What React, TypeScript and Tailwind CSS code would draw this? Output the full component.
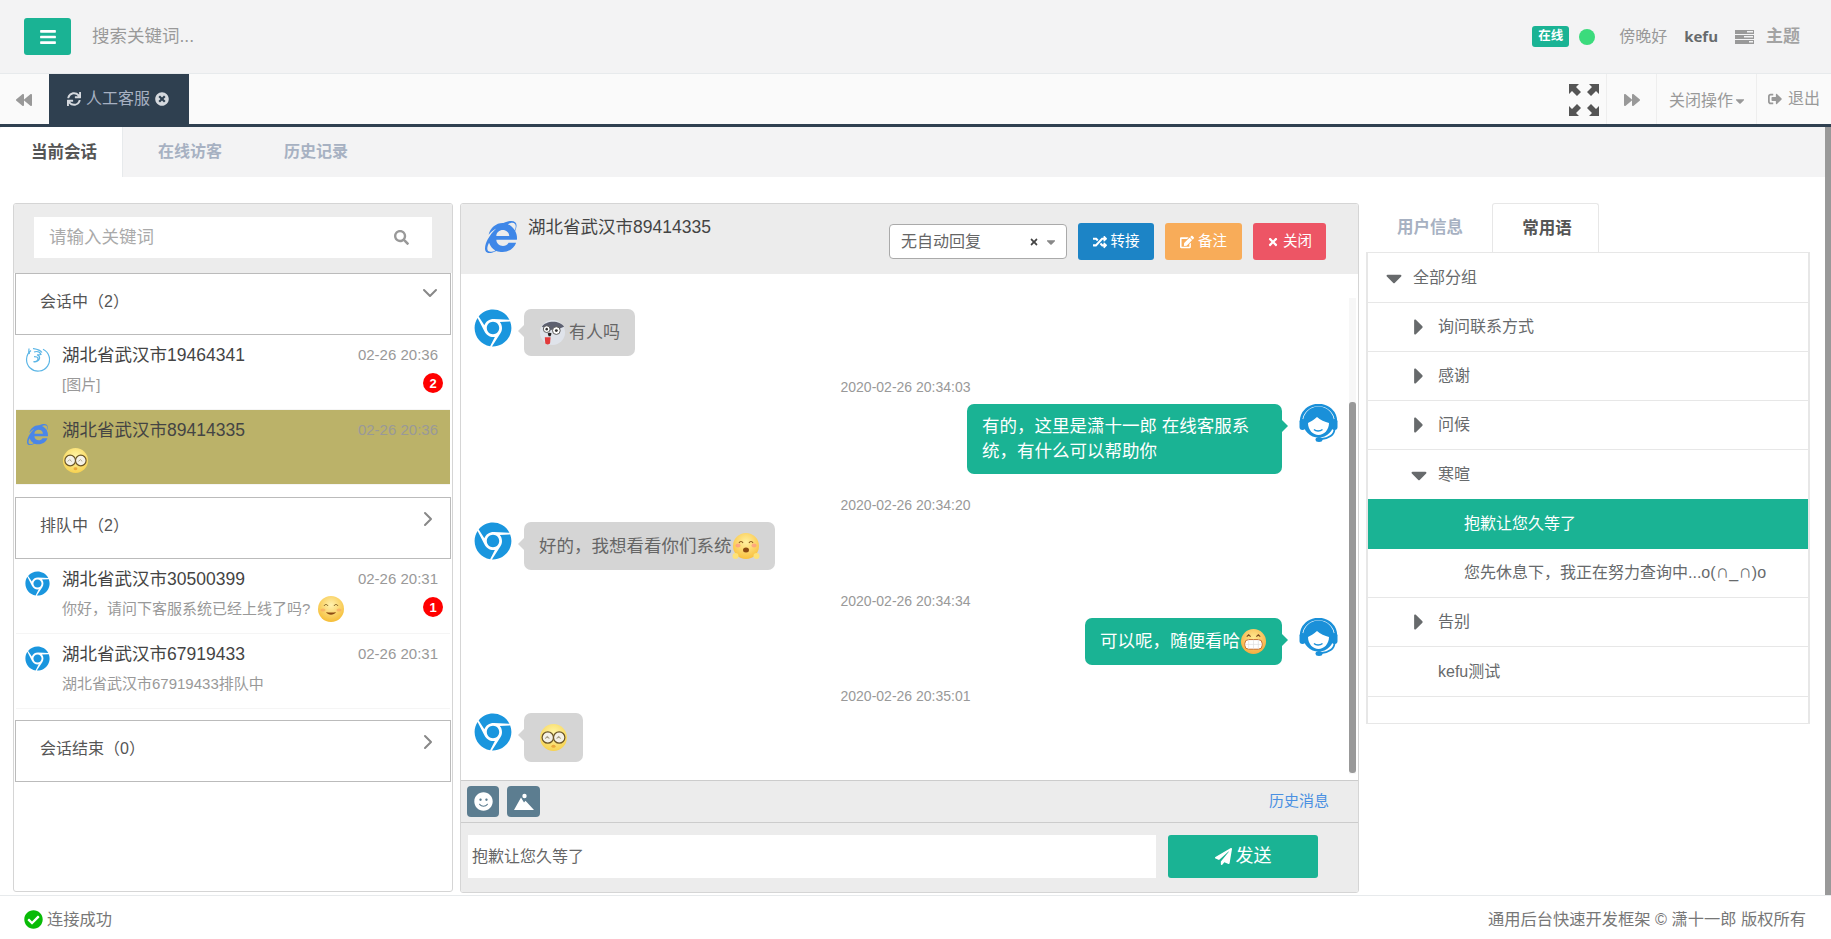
import type { ReactNode } from "react";
import {
  FaBars,
  FaSync,
  FaTimesCircle,
  FaBackward,
  FaForward,
  FaSearch,
  FaRandom,
  FaEdit,
  FaTimes,
  FaSmile,
  FaPaperPlane,
  FaCaretDown,
  FaCaretRight,
  FaCheckCircle,
  FaChrome,
  FaInternetExplorer,
  FaSignOutAlt,
} from "react-icons/fa";
import { FiChevronDown, FiChevronRight } from "react-icons/fi";

const FONT = "font-['Liberation_Sans','Noto_Sans_CJK_SC',sans-serif]";

function ExpandIcon() {
  return (
    <svg width="32" height="34" viewBox="0 0 32 34" fill="#555">
      <path d="M1 1h10l-3 3 5 5-4 4-5-5-3 3z" />
      <path d="M31 1H21l3 3-5 5 4 4 5-5 3 3z" />
      <path d="M1 33h10l-3-3 5-5-4-4-5 5-3-3z" />
      <path d="M31 33H21l3-3-5-5 4-4 5 5 3-3z" />
    </svg>
  );
}

function TasksIcon() {
  return (
    <svg width="19" height="14" viewBox="0 0 19 14" fill="#999">
      <path d="M0 0h19v4H0zM0 5h19v4H0zM0 10h19v4H0z" />
      <path d="M12 1h6v1.500h-6zM9 6h9v1.500H9zM14 11h4v1.500h-4z" fill="#f3f3f4" />
    </svg>
  );
}

function FirefoxIcon() {
  return (
    <svg width="25" height="25" viewBox="0 0 25 25" fill="none" stroke="#5cb6e6" strokeWidth="1.200">
      <path d="M6 3.500A11.500 11.500 0 1 0 18 2.200" />
      <path d="M4 1.500c-.5 2.500-.3 4 .5 5.500M8 1.500c3 .5 7 1 9 4" />
      <path d="M9 5c3-1 6 0 7 2.500-1.500.5-3 .5-4 .2 2 .8 3 1.800 2.500 3.800-.6 2.500-3.500 4-6 3.200 2 0 4.500-1 4.500-3 0-1.500-2-2-4-2" />
    </svg>
  );
}

function AgentIcon() {
  return (
    <svg width="39" height="39" viewBox="0 0 39 39" className="shrink-0">
      <circle cx="19.500" cy="18" r="15.500" fill="#1a90d9" />
      <path d="M9 19c2-1 6-3 9-6 3 3 8 5 12 6 0 7-5 12-10.500 12S9 26 9 19z" fill="#fff" />
      <path d="M2 18C2 8 10 1 19.500 1S37 8 37 18" fill="none" stroke="#1a90d9" strokeWidth="2.500" />
      <rect x="0.500" y="15" width="6" height="11" rx="3" fill="#1a90d9" />
      <rect x="32.500" y="15" width="6" height="11" rx="3" fill="#1a90d9" />
      <path d="M35.500 25c0 6-6 9.500-13 10" fill="none" stroke="#1a90d9" strokeWidth="1.800" />
      <ellipse cx="20" cy="35.500" rx="3.500" ry="2.500" fill="#1a90d9" />
      <path d="M15 25.500c2 2 6 2 8.500 0" fill="none" stroke="#1a90d9" strokeWidth="1.400" />
    </svg>
  );
}

function Face({ size, children, id, from = "#fff3a0", to = "#f5c02e" }: { size: number; children: ReactNode; id: string; from?: string; to?: string }) {
  return (
    <svg width={size} height={size} viewBox="0 0 28 28" className="shrink-0">
      <defs>
        <radialGradient id={id} cx="50%" cy="35%" r="70%">
          <stop offset="0%" stopColor={from} />
          <stop offset="100%" stopColor={to} />
        </radialGradient>
      </defs>
      <circle cx="14" cy="14" r="13" fill={`url(#${id})`} />
      {children}
    </svg>
  );
}

function NerdEmoji({ size, id }: { size: number; id: string }) {
  return (
    <Face size={size} id={id} from="#fff6a8" to="#f6cf4a">
      <circle cx="8.500" cy="14" r="5.500" fill="#f4f1e6" stroke="#6b5526" strokeWidth="1.200" />
      <circle cx="19.500" cy="14" r="5.500" fill="#f4f1e6" stroke="#6b5526" strokeWidth="1.200" />
      <path d="M6 15l2-2 2 2M17 15l2-2 2 2" fill="none" stroke="#a9a08a" strokeWidth="1" />
      <ellipse cx="14" cy="22.500" rx="2" ry="1.500" fill="#eaa83b" />
    </Face>
  );
}

function DogEmoji() {
  return (
    <svg width="27" height="27" viewBox="0 0 28 28" className="shrink-0">
      <circle cx="14" cy="14" r="13" fill="#dfe3ea" />
      <path d="M3 8c3-6 18-8 23 0-4 1-6 3-7 5-2-2-6-3-9 0-2-3-4-4-7-5z" fill="#5d6070" />
      <circle cx="18" cy="12" r="4" fill="#fff" stroke="#555" strokeWidth="1" />
      <circle cx="8" cy="10.500" r="3.500" fill="#fff" stroke="#555" strokeWidth="1" />
      <circle cx="18" cy="12" r="1.500" fill="#333" />
      <circle cx="8" cy="10.500" r="1.300" fill="#333" />
      <path d="M9 15c1-1 3-1 4 0l-1 3h-2z" fill="#222" />
      <path d="M6 19h6l-.5 6c-.5 2-4.500 2-5 0z" fill="#e23a3a" />
    </svg>
  );
}

function SmileEmoji() {
  return (
    <Face size={28} id="smile" from="#fff2b0" to="#f5b92c">
      <path d="M7 11c1-2 3-2 4 0M17 11c1-2 3-2 4 0" fill="none" stroke="#7a5a20" strokeWidth="1" />
      <path d="M9 17c2 3.500 8 3.500 10 0-2 .8-8 .8-10 0z" fill="#8b4a12" />
      <ellipse cx="6" cy="15" rx="2.500" ry="1.500" fill="#f8a060" opacity=".6" />
      <ellipse cx="22" cy="15" rx="2.500" ry="1.500" fill="#f8a060" opacity=".6" />
    </Face>
  );
}

function HugEmoji() {
  return (
    <Face size={28} id="hug" from="#fff0a0" to="#f9bd35">
      <path d="M7 11c1-2 3-2 4 0M17 11c1-2 3-2 4 0" fill="none" stroke="#8a5a20" strokeWidth="1.100" />
      <ellipse cx="6" cy="13.500" rx="2.500" ry="2" fill="#f88" opacity=".6" />
      <ellipse cx="22" cy="13.500" rx="2.500" ry="2" fill="#f88" opacity=".6" />
      <ellipse cx="14" cy="18" rx="3" ry="2.500" fill="#8b4a12" />
      <circle cx="3.500" cy="24" r="3" fill="#fde27a" />
      <circle cx="24.500" cy="24" r="3" fill="#fde27a" />
    </Face>
  );
}

function GrinEmoji() {
  return (
    <Face size={27} id="grin" from="#ffe98f" to="#f4a83a">
      <path d="M7 9l2-2 2 2M17 9l2-2 2 2" fill="none" stroke="#7a4a20" strokeWidth="1.200" />
      <rect x="5" y="12" width="18" height="10" rx="4" fill="#fff" stroke="#c56a2a" strokeWidth="1" />
      <path d="M9 12v10M14 12v10M19 12v10M5 17h18" stroke="#ddd" strokeWidth=".7" />
    </Face>
  );
}

function ImageBtnIcon() {
  return (
    <svg width="20" height="18" viewBox="0 0 20 18" fill="#fff">
      <circle cx="10.500" cy="3" r="2.200" />
      <path d="M0 17L7 4.500l3 5 1.500-1.800L20 17z" />
    </svg>
  );
}

function SectionHeader({ title, open }: { title: string; open?: boolean }) {
  return (
    <div className="relative mx-[1px] flex h-[62px] shrink-0 border border-[#bbb] bg-white pl-[24px] pt-[16px] text-[16px] leading-[24px] text-[#555]">
      {title}
      {open ? (
        <FiChevronDown className="absolute right-[8px] top-[7px] text-[24px] text-[#888]" />
      ) : (
        <FiChevronRight className="absolute right-[10px] top-[9px] text-[24px] text-[#888]" />
      )}
    </div>
  );
}

function SessionRow({
  icon,
  name,
  time,
  sub,
  badge,
  active,
}: {
  icon: ReactNode;
  name: string;
  time: string;
  sub: ReactNode;
  badge?: string;
  active?: boolean;
}) {
  return (
    <div className={`relative mx-[2px] flex h-[75px] shrink-0 border-b border-[#f5f5f5] pl-[9px] pr-[12px] ${active ? "bg-[#bbb269]" : "bg-white"}`}>
      <div className="flex w-[37px] shrink-0 justify-start pt-[12px]">{icon}</div>
      <div className="min-w-0 flex-1">
        <div className="flex items-center justify-between pt-[8px]">
          <span className="text-[17.5px] leading-[24px] text-[#444]">{name}</span>
          <span className="text-[15px] leading-[20px] text-[#999]">{time}</span>
        </div>
        <div className="flex h-[30px] items-center pt-[6px] text-[15px] text-[#999]">{sub}</div>
      </div>
      {badge && (
        <span className="absolute right-[7px] top-[38px] flex size-[20px] items-center justify-center rounded-full bg-[#f00] text-[13px] font-bold leading-none text-white">
          {badge}
        </span>
      )}
    </div>
  );
}

function Stamp({ children }: { children: string }) {
  return <div className="mb-[7px] pr-[8px] text-center text-[14px] leading-[20px] text-[#999]">{children}</div>;
}

function LeftMsg({ children, mb }: { children: ReactNode; mb: string }) {
  return (
    <div className={`flex items-start pl-[13px] ${mb}`}>
      <FaChrome className="mr-[12px] size-[38px] shrink-0 text-[#1a96de]" />
      <div className="relative flex min-h-[46px] items-center rounded-[7px] bg-[#d5d5d5] px-[15px] py-[10px] text-[17.5px] leading-[25px] text-[#666]">
        <span className="absolute left-[-6px] top-[16px] size-0 border-y-[6px] border-r-[6px] border-y-transparent border-r-[#d5d5d5]" />
        {children}
      </div>
    </div>
  );
}

function RightMsg({ children, mb, width }: { children: ReactNode; mb: string; width: string }) {
  return (
    <div className={`flex items-start justify-end pr-[20px] ${mb}`}>
      <div className={`relative mr-[17px] min-h-[46px] rounded-[7px] bg-[#1ab394] px-[15px] py-[10px] text-[17.5px] leading-[25px] text-white ${width}`}>
        <span className="absolute right-[-6px] top-[16px] size-0 border-y-[6px] border-l-[6px] border-y-transparent border-l-[#1ab394]" />
        {children}
      </div>
      <AgentIcon />
    </div>
  );
}

function TreeRow({
  label,
  indent,
  caret,
  active,
  last,
  tall,
}: {
  label: ReactNode;
  indent: string;
  caret?: "down" | "right";
  active?: boolean;
  last?: boolean;
  tall?: boolean;
}) {
  return (
    <div
      className={`flex shrink-0 items-center text-[16px] ${tall ? "h-[50px]" : "h-[49px]"} ${indent} ${active ? "bg-[#1ab394] text-white" : "text-[#676a6c]"} ${
        last ? "" : "border-b border-[#e7e7e7]"
      }`}
    >
      {caret === "down" && <FaCaretDown className="mr-[11px] w-[16px] shrink-0 text-[26px] text-[#676a6c]" />}
      {caret === "right" && <FaCaretRight className="mr-[11px] w-[16px] shrink-0 text-[26px] text-[#676a6c]" />}
      {label}
    </div>
  );
}

export default function App() {
  return (
    <div className={`${FONT} flex h-screen w-full flex-col overflow-hidden bg-white text-[#676a6c]`}>
      {/* NAVBAR */}
      <div className="flex h-[74px] shrink-0 items-center border-b border-[#e7eaec] bg-[#f3f3f4] pl-[24px] pr-[31px]">
        <div className="flex h-[37px] w-[47px] items-center justify-center rounded-[3px] bg-[#1ab394] text-[18px] text-white">
          <FaBars />
        </div>
        <span className="ml-[21px] text-[17.5px] text-[#999]">搜索关键词...</span>
        <div className="ml-auto flex items-center">
          <span className="flex h-[21px] w-[37px] items-center justify-center rounded-[3px] bg-[#1ab394] text-[12.5px] font-bold text-white">在线</span>
          <span className="ml-[10px] size-[16px] rounded-full bg-[#3bdb7c]" />
          <span className="ml-[24px] text-[16px] text-[#999]">傍晚好</span>
          <span className="ml-[17px] font-['Open_Sans',sans-serif] text-[15px] font-bold text-[#676a6c]">kefu</span>
          <span className="ml-[17px]">
            <TasksIcon />
          </span>
          <span className="ml-[12px] text-[17px] font-bold text-[#a3a3a3]">主题</span>
        </div>
      </div>

      {/* TAB BAR */}
      <div className="flex h-[53px] shrink-0 border-b-[3px] border-[#2f4050] bg-[#fafafa]">
        <div className="flex w-[49px] items-center justify-center pr-[1px] pt-[2px] text-[16px] text-[#999]">
          <FaBackward />
        </div>
        <div className="-mb-[3px] flex w-[140px] items-center bg-[#2f4050] pl-[18px] pb-[3px] text-[16px] text-[#a7b1c2]">
          <FaSync className="mr-[5px] text-[14px] text-[#d5d9de]" />
          人工客服
          <FaTimesCircle className="ml-[5px] text-[14px] text-[#d5d9de]" />
        </div>
        <div className="ml-auto flex h-full items-stretch">
          <div className="flex w-[47px] items-center justify-center pl-[2px] pt-[2px]">
            <ExpandIcon />
          </div>
          <div className="flex w-[50px] items-center justify-center border-l border-[#eee] pt-[2px] text-[16px] text-[#999]">
            <FaForward />
          </div>
          <div className="flex w-[100px] items-center justify-center border-l border-[#eee] pl-[3px] pt-[3px] text-[16px] text-[#999]">
            关闭操作
            <FaCaretDown className="text-[14px]" />
          </div>
          <div className="flex w-[75px] items-center justify-center border-l border-[#eee] text-[16px] text-[#999]">
            <FaSignOutAlt className="mr-[6px] text-[14px]" />
            退出
          </div>
        </div>
      </div>

      {/* CONTENT */}
      <div className="flex min-h-0 flex-1">
        <div className="flex min-w-0 flex-1 flex-col">
          {/* SUB TABS */}
          <div className="flex h-[50px] shrink-0 bg-[#f3f3f4] text-[16px] font-bold">
            <div className="flex w-[123px] items-center justify-center rounded-tl-[3px] border-r border-[#e7eaec] bg-white pl-[6px] text-[16.5px] text-[#555]">当前会话</div>
            <div className="ml-[35px] flex items-center text-[#a7b1c2]">在线访客</div>
            <div className="ml-[62px] flex items-center text-[#a7b1c2]">历史记录</div>
          </div>

          <div className="flex min-h-0 flex-1 pl-[13px] pr-[15px] pt-[26px]">
            {/* SESSION LIST */}
            <div className="flex h-[689px] w-[440px] shrink-0 flex-col overflow-hidden rounded-[3px] border border-[#d5d5d5] bg-white">
              <div className="flex h-[69px] shrink-0 items-start bg-[#ececec] pl-[20px] pr-[20px] pt-[13px]">
                <div className="flex h-[41px] w-full items-center justify-between bg-white pl-[15px] pr-[23px] text-[17.5px] text-[#aaa]">
                  请输入关键词
                  <FaSearch className="text-[15px] text-[#999]" />
                </div>
              </div>
              <SectionHeader title="会话中（2）" open />
              <SessionRow icon={<FirefoxIcon />} name="湖北省武汉市19464341" time="02-26 20:36" sub="[图片]" badge="2" />
              <SessionRow
                active
                icon={<FaInternetExplorer className="ml-[2px] mt-[2px] size-[21px] text-[#4a86e8]" />}
                name="湖北省武汉市89414335"
                time="02-26 20:36"
                sub={<NerdEmoji size={27} id="nerd1" />}
              />
              <div className="mt-[12px]">
                <SectionHeader title="排队中（2）" />
              </div>
              <SessionRow
                icon={<FaChrome className="size-[25px] text-[#1a96de]" />}
                name="湖北省武汉市30500399"
                time="02-26 20:31"
                sub={
                  <>
                    你好，请问下客服系统已经上线了吗?
                    <span className="ml-[7px]">
                      <SmileEmoji />
                    </span>
                  </>
                }
                badge="1"
              />
              <SessionRow
                icon={<FaChrome className="size-[25px] text-[#1a96de]" />}
                name="湖北省武汉市67919433"
                time="02-26 20:31"
                sub="湖北省武汉市67919433排队中"
              />
              <div className="mt-[11px]">
                <SectionHeader title="会话结束（0）" />
              </div>
            </div>

            {/* CHAT */}
            <div className="ml-[7px] flex h-[690px] w-[899px] shrink-0 flex-col overflow-hidden rounded-[3px] border border-[#d5d5d5] bg-white">
              <div className="flex h-[70px] shrink-0 items-start bg-[#ececec] pl-[24px] pr-[32px]">
                <FaInternetExplorer className="mt-[17px] size-[32px] text-[#3f87e8]" />
                <span className="ml-[11px] mt-[10px] text-[17.5px] leading-[26px] text-[#444]">湖北省武汉市89414335</span>
                <div className="ml-auto mt-[19px] flex items-start">
                  <div className="mt-[1px] flex h-[35px] w-[178px] items-center rounded-[4px] border border-[#aaa] bg-white pl-[11px] pr-[8px] text-[16px] text-[#666]">
                    无自动回复
                    <FaTimes className="ml-auto text-[10px] text-[#444]" />
                    <FaCaretDown className="ml-[5px] text-[14px] text-[#888]" />
                  </div>
                  <div className="ml-[11px] flex h-[37px] w-[76px] items-center justify-center rounded-[3px] bg-[#1c84c6] text-[14.5px] text-white">
                    <FaRandom className="mr-[4px] text-[14px]" />
                    转接
                  </div>
                  <div className="ml-[11px] flex h-[37px] w-[77px] items-center justify-center rounded-[3px] bg-[#f8ac59] text-[14.5px] text-white">
                    <FaEdit className="mr-[4px] text-[14px]" />
                    备注
                  </div>
                  <div className="ml-[11px] flex h-[37px] w-[73px] items-center justify-center rounded-[3px] bg-[#ed5565] text-[14.5px] text-white">
                    <FaTimes className="mr-[4px] text-[12px]" />
                    关闭
                  </div>
                </div>
              </div>

              {/* MESSAGES */}
              <div className="relative min-h-0 flex-1 pt-[35px]">
                <div className="absolute bottom-[6px] right-[2px] top-[24px] w-[7px] bg-[#f7f7f7]">
                  <div className="mt-[104px] h-[371px] w-full rounded-[3px] bg-[#999]" />
                </div>
                <LeftMsg mb="mb-[21px]">
                  <DogEmoji />
                  <span className="ml-[3px] text-[17px]">有人吗</span>
                </LeftMsg>
                <Stamp>2020-02-26 20:34:03</Stamp>
                <RightMsg mb="mb-[21px]" width="w-[315px]">
                  有的，这里是潇十一郎 在线客服系统，有什么可以帮助你
                </RightMsg>
                <Stamp>2020-02-26 20:34:20</Stamp>
                <LeftMsg mb="mb-[21px]">
                  好的，我想看看你们系统
                  <HugEmoji />
                </LeftMsg>
                <Stamp>2020-02-26 20:34:34</Stamp>
                <RightMsg mb="mb-[21px]" width="flex items-center">
                  可以呢，随便看哈
                  <GrinEmoji />
                </RightMsg>
                <Stamp>2020-02-26 20:35:01</Stamp>
                <LeftMsg mb="mb-0">
                  <NerdEmoji size={29} id="nerd2" />
                </LeftMsg>
              </div>

              {/* TOOLBAR */}
              <div className="flex h-[43px] shrink-0 items-center border-y border-[#ccc] bg-[#ececec] pl-[6px] pr-[29px]">
                <div className="flex h-[31px] w-[32px] items-center justify-center rounded-[4px] bg-[#5c7d90] text-[19px] text-white">
                  <FaSmile />
                </div>
                <div className="ml-[8px] flex h-[31px] w-[33px] items-center justify-center rounded-[4px] bg-[#5c7d90]">
                  <ImageBtnIcon />
                </div>
                <span className="ml-auto text-[15px] text-[#4a90e2]">历史消息</span>
              </div>

              <div className="flex h-[69px] shrink-0 items-start bg-[#ececec] pl-[7px] pt-[12px]">
                <div className="flex h-[43px] w-[688px] items-center bg-white pl-[4px] text-[16px] text-[#666]">抱歉让您久等了</div>
                <div className="ml-[12px] flex h-[43px] w-[150px] items-center justify-center rounded-[3px] bg-[#1ab394] text-[18px] text-white">
                  <FaPaperPlane className="mr-[4px] text-[17px]" />
                  发送
                </div>
              </div>
            </div>

            {/* QUICK REPLIES */}
            <div className="ml-[7px] flex min-w-0 flex-1 flex-col">
              <div className="flex h-[49px] shrink-0 text-[16.5px] font-bold">
                <div className="flex w-[126px] items-center justify-center pl-[2px] text-[#a7b1c2]">用户信息</div>
                <div className="flex w-[107px] items-center justify-center rounded-t-[3px] border-x border-t border-[#e7e7e7] pl-[3px] text-[#555]">常用语</div>
              </div>
              <div className="flex h-[472px] flex-col border-x-2 border-y border-[#e7e7e7]">
                <div className="border-b border-[#e7e7e7]">
                  <TreeRow label="全部分组" indent="pl-[18px]" caret="down" last />
                </div>
                <TreeRow label="询问联系方式" indent="pl-[43px]" caret="right" />
                <TreeRow label="感谢" indent="pl-[43px]" caret="right" />
                <TreeRow label="问候" indent="pl-[43px]" caret="right" />
                <TreeRow label="寒暄" indent="pl-[43px]" caret="down" last />
                <TreeRow label="抱歉让您久等了" indent="pl-[96px]" active last tall />
                <TreeRow
                  label={
                    <span>
                      您先休息下，我正在努力查询中...o(<span className="text-[19px] leading-none">∩</span>_<span className="text-[19px] leading-none">∩</span>)o
                    </span>
                  }
                  indent="pl-[96px]"
                />
                <TreeRow label="告别" indent="pl-[43px]" caret="right" />
                <TreeRow label="kefu测试" indent="pl-[70px]" tall />
              </div>
            </div>
          </div>
        </div>
        {/* PAGE SCROLLBAR */}
        <div className="w-[6px] shrink-0 bg-[#999]" />
      </div>

      {/* FOOTER */}
      <div className="flex h-[44px] shrink-0 items-center justify-between border-t border-[#e7eaec] bg-white pl-[24px] pr-[25px] pt-[3px] text-[16.25px] text-[#777]">
        <span className="flex items-center">
          <FaCheckCircle className="mr-[4px] text-[19px] text-[#09bb07]" />
          连接成功
        </span>
        <span>通用后台快速开发框架 © 潇十一郎 版权所有</span>
      </div>
    </div>
  );
}
